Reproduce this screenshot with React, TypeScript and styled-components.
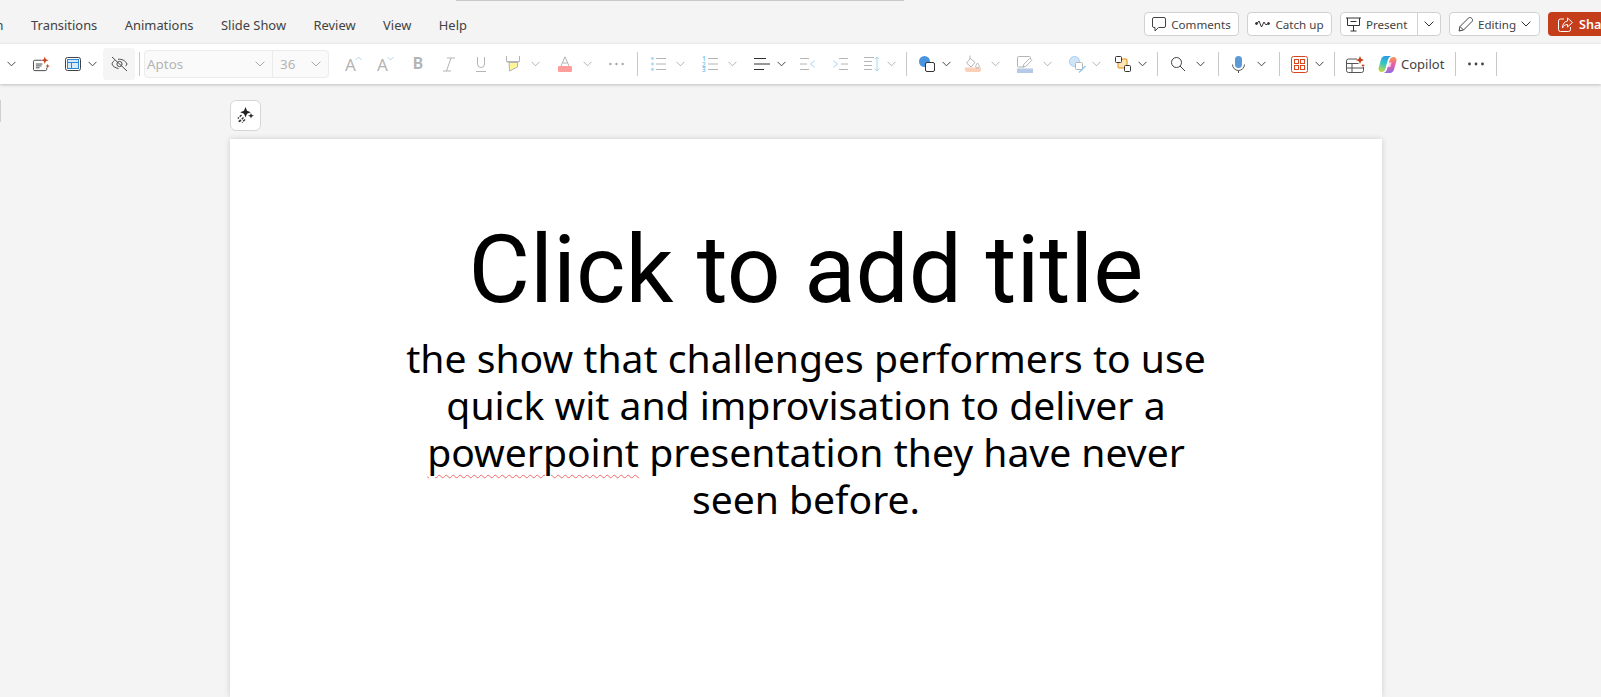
import React from "react";
import styled, { createGlobalStyle } from "styled-components";

const Global = createGlobalStyle`
  html, body { margin: 0; padding: 0; height: 100%; background: #f4f4f4; overflow: hidden; }
  #root { height: 100%; }
  * { box-sizing: border-box; }
`;

const UI = `"Noto Sans", "Open Sans", sans-serif`;
const HEADING = `"Roboto", "Noto Sans", sans-serif`;
const BODY = `"Noto Sans", "Roboto", sans-serif`;
const DIM = "#b4b4b4";
const BLUE = "#a8d6f3";

const Page = styled.div`
  width: 1601px; height: 697px; overflow: hidden; display: flex; flex-direction: column;
  background: #f4f4f4; font-family: ${UI}; position: relative;
`;
const TopSliver = styled.div`
  position: absolute; left: 456px; top: 0; width: 448px; height: 1px; background: #c8c8c8;
`;
const TabRow = styled.div`
  height: 44px; flex: none; display: flex; align-items: center; padding-top: 5px; overflow: hidden;
`;
const Tabs = styled.div`display: flex; gap: 27.5px; margin-left: -38.5px; flex: 1;`;
const Tab = styled.span`font-size: 12.9px; color: #424242; white-space: nowrap;`;
const Actions = styled.div`display: flex; gap: 8px; margin-right: -60px; align-items: stretch; height: 24px; margin-top: -1px;`;
const ActionBtn = styled.div<{ $w: number }>`
  width: ${p => p.$w}px; display: flex; align-items: center; justify-content: center; gap: 5px;
  background: #fff; border: 1px solid #d1d1d1; border-radius: 4px; font-size: 11.6px; color: #424242; white-space: nowrap;
`;
const SplitPart = styled.div<{ $w: number; $divider?: boolean }>`
  width: ${p => p.$w}px; height: 100%; display: flex; align-items: center; justify-content: center; gap: 5px;
  border-left: ${p => (p.$divider ? "1px solid #d1d1d1" : "none")};
`;
const ShareBtn = styled.div`
  width: 113px; display: flex; align-items: center; gap: 6px; padding-left: 10px; background: #c43e1c;
  border-radius: 4px; color: #fff; font-size: 12.6px; font-weight: 600;
`;

const Ribbon = styled.div`
  height: 40px; flex: none; background: #fff; display: flex; align-items: center; padding-left: 7px;
  box-shadow: 0 1px 3px rgba(0,0,0,.22); position: relative; z-index: 1;
`;
const Slot = styled.div<{ $g: number; $w: number }>`
  margin-left: ${p => p.$g}px; width: ${p => p.$w}px; flex: none; display: flex; align-items: center; justify-content: center;
`;
const Sep = styled.div<{ $g: number }>`
  margin-left: ${p => p.$g}px; width: 1px; height: 24px; background: #c8c8c8; flex: none;
`;
const HideBtn = styled(Slot)`height: 32px; background: #f5f5f5; border-radius: 4px;`;
const Combo = styled.div<{ $g: number }>`
  margin-left: ${p => p.$g}px; width: 185px; height: 28px; flex: none; display: flex;
  border: 1px solid #ebebeb; border-radius: 4px; background: #fafafa; font-size: 13.4px; color: ${DIM};
`;
const ComboPart = styled.div<{ $w: number; $divider?: boolean }>`
  width: ${p => p.$w}px; display: flex; align-items: center; justify-content: space-between; padding: 0 7px 0 2px;
  border-left: ${p => (p.$divider ? "1px solid #ebebeb" : "none")};
`;
const ComboSize = styled(ComboPart)`padding-left: 7px;`;
const CopilotLabel = styled.span<{ $g: number }>`
  margin-left: ${p => p.$g}px; width: 45px; font-size: 13px; color: #424242; flex: none; white-space: nowrap;
`;

const Canvas = styled.main`flex: 1; min-height: 0; padding: 16px 0 0 0; display: flex; flex-direction: column; position: relative;`;
const PaneEdge = styled.div`position: absolute; left: 0; top: 16px; width: 1px; height: 22px; background: #d0d0d0;`;
const AiBtn = styled.div`
  margin-left: 230px; width: 31px; height: 31px; flex: none; background: #fff; border: 1px solid #d6d6d6; border-radius: 6px;
  display: flex; align-items: center; justify-content: center;
`;
const Slide = styled.section`
  margin: 8px 0 0 230px; width: 1152px; flex: 1; background: #fff; box-shadow: 0 0 6px rgba(0,0,0,.16);
  display: flex; flex-direction: column; align-items: center; color: #000; text-align: center;
`;
const Title = styled.h1`
  margin: 75px 0 0; font-family: ${HEADING}; font-size: 94.5px; font-weight: 400; line-height: 112px; white-space: nowrap;
`;
const Body = styled.p`
  margin: 8px 0 0; font-family: ${BODY}; font-size: 39.1px; font-weight: 400; line-height: 47px; white-space: nowrap;
`;
const Misspelled = styled.span`
  text-decoration: underline wavy #f26a6a 1px; text-underline-offset: 7px;
`;

const Chev = ({ dark }: { dark?: boolean }) => (
  <svg width="10" height="6" viewBox="0 0 10 6" fill="none" stroke={dark ? "#303030" : "#a8a8a8"} strokeWidth="1">
    <path d="M.6.6 5 5 9.4.6" />
  </svg>
);
const NewSlide = () => (
  <svg width="18" height="17" viewBox="0 0 18 17" fill="none">
    <path d="M9 4H2a1.500 1.500 0 0 0-1.500 1.500v8A1.500 1.500 0 0 0 2 15h11a1.500 1.500 0 0 0 1.500-1.500V12" stroke="#424242" />
    <path d="M3 8h7M3 10h6M3 12h4" stroke="#424242" />
    <path d="M12.500 0l1 3 3 1-3 1-1 3-1-3-3-1 3-1zM15.500 8l.7 1.500 1.500.7-1.500.7-.7 1.500-.7-1.500-1.500-.7 1.500-.7z" fill="#c8401c" />
  </svg>
);
const LayoutIc = () => (
  <svg width="16" height="14" viewBox="0 0 16 14" fill="none">
    <rect x=".5" y=".5" width="15" height="13" rx="2" stroke="#424242" />
    <rect x="2.500" y="2.500" width="11" height="9" fill="#d6ebf9" stroke="#2b88d8" />
    <path d="M2.500 5.500h11M6.500 5.500v6" stroke="#2b88d8" />
  </svg>
);
const EyeOff = () => (
  <svg width="17" height="16" viewBox="0 0 17 16" fill="none" stroke="#4a4a4a">
    <path d="M1 1l15 14" />
    <path d="M3.500 4.500C2 5.500 1.200 7 1 8c.6 2.300 3.500 4 6.500 4.500M7 3.300C10.500 2.800 14.500 4.500 16 8c-.3.800-.8 1.500-1.300 2.200" />
    <circle cx="8.500" cy="8" r="2.600" />
  </svg>
);
const FontGrow = ({ up }: { up?: boolean }) => (
  <svg width="17" height="18" viewBox="0 0 17 18" fill="none">
    <text x="0" y="16" fontFamily="Noto Sans" fontSize="17" fill={DIM}>A</text>
    <path d={up ? "M10.500 5 13.500 2l3 3" : "M10.500 2l3 3 3-3"} stroke={BLUE} />
  </svg>
);
const BoldIc = () => (
  <svg width="12" height="16" viewBox="0 0 12 16">
    <text x="6" y="14.500" textAnchor="middle" fontFamily="Roboto" fontSize="19" fontWeight={700} fill={DIM}>B</text>
  </svg>
);
const ItalicIc = () => (
  <svg width="12" height="15" viewBox="0 0 12 15" fill="none" stroke={DIM}>
    <path d="M4 1h8M8 1 3.500 14M0 14h8" />
  </svg>
);
const UnderlineIc = () => (
  <svg width="10" height="15" viewBox="0 0 10 15" fill="none" stroke={DIM}>
    <path d="M1.500 0v7a3.500 3.500 0 0 0 7 0V0M0 14.500h10" />
  </svg>
);
const Highlighter = () => (
  <svg width="14" height="16" viewBox="0 0 14 16" fill="none">
    <path d="M3 6.500 11.500 6.500 11.500 11 3.500 15z" fill="#fdf59a" stroke="#b4b4b4" />
    <path d="M.5 0v5.500h13V0M1 6h12" stroke="#b4b4b4" />
  </svg>
);
const FontColor = () => (
  <svg width="14" height="16" viewBox="0 0 14 16" fill="none">
    <path d="M3 10 7 .8 11 10M4.500 7h5" stroke="#b4b4b4" />
    <rect y="10" width="14" height="6" rx="1" fill="#ff9c9c" />
  </svg>
);
const Dots = ({ c = "#a8a8a8", r = 1.300 }: { c?: string; r?: number }) => (
  <svg width="18" height="4" viewBox="0 0 18 4" fill={c}>
    <circle cx="2.500" cy="2" r={r} /><circle cx="9" cy="2" r={r} /><circle cx="15.500" cy="2" r={r} />
  </svg>
);
const Bullets = () => (
  <svg width="15" height="14" viewBox="0 0 15 14" fill="none">
    <g fill={BLUE}><circle cx="1.500" cy="1.500" r="1.400" /><circle cx="1.500" cy="7" r="1.400" /><circle cx="1.500" cy="12.500" r="1.400" /></g>
    <path d="M5 1.500h10M5 7h10M5 12.500h10" stroke="#b4b4b4" />
  </svg>
);
const Numbers = () => (
  <svg width="16" height="16" viewBox="0 0 16 16" fill="none">
    <g fill="#8ecbf0" fontFamily="Noto Sans" fontSize="6.500" fontWeight="700">
      <text x="0" y="5">1</text><text x="0" y="10.500">2</text><text x="0" y="16">3</text>
    </g>
    <path d="M6 2.500h10M6 8h10M6 13.500h10" stroke="#b4b4b4" />
  </svg>
);
const AlignIc = () => (
  <svg width="16" height="14" viewBox="0 0 16 14" fill="none" stroke="#303030">
    <path d="M0 1.500h12M0 7h16M0 12.500h10" />
  </svg>
);
const Indent = ({ inc }: { inc?: boolean }) => (
  <svg width="15" height="14" viewBox="0 0 15 14" fill="none">
    {inc ? (
      <><path d="M6 1.500h9M8 7h7M6 12.500h9" stroke="#b4b4b4" /><path d="M0 3.500 4.500 7 0 10.500" stroke={BLUE} /></>
    ) : (
      <><path d="M0 1.500h9M0 7h7M0 12.500h9" stroke="#b4b4b4" /><path d="M15 3.500 10.500 7 15 10.500" stroke={BLUE} /></>
    )}
  </svg>
);
const LineSpacing = () => (
  <svg width="16" height="16" viewBox="0 0 16 16" fill="none">
    <path d="M0 1.500h10M0 5.500h8M0 9.500h8M0 13.500h8" stroke="#b4b4b4" />
    <path d="M13 1v14M10.800 3.200 13 1l2.200 2.200M10.800 12.800 13 15l2.200-2.200" stroke={BLUE} />
  </svg>
);
const Shapes = () => (
  <svg width="16" height="16" viewBox="0 0 16 16" fill="none">
    <circle cx="5.500" cy="5.500" r="5.500" fill="#4a95df" />
    <rect x="6.500" y="6.500" width="9" height="9" rx="1.500" fill="#fff" stroke="#333" />
  </svg>
);
const Fill = () => (
  <svg width="16" height="18" viewBox="0 0 16 18" fill="none">
    <path d="M0 12.500h16v2.500a2 2 0 0 1-2 2H2a2 2 0 0 1-2-2z" fill="#fbd0b9" />
    <path d="M5 .5v3.500M1.500 8 5.500 3.500 10 7.500 6 12z" stroke="#b4b4b4" />
    <path d="M12.500 8c-1 1.500-1.800 2.300-1.800 3.300a1.800 1.800 0 0 0 3.600 0c0-1-.8-1.800-1.800-3.300z" stroke="#b4b4b4" />
  </svg>
);
const Outline = () => (
  <svg width="16" height="17" viewBox="0 0 16 17" fill="none">
    <rect y="12.500" width="16" height="4.500" fill="#b7c9e8" />
    <path d="M7 11H1.500a1 1 0 0 1-1-1V1.500a1 1 0 0 1 1-1h11a1 1 0 0 1 1 1V3" stroke="#b4b4b4" />
    <path d="M6 11l.8-2.700 6-6 2 2-6 6z" fill="#fff" stroke="#b4b4b4" />
  </svg>
);
const Effects = () => (
  <svg width="17" height="17" viewBox="0 0 17 17" fill="none">
    <circle cx="5.500" cy="5.500" r="5" fill="#cfe6f8" stroke="#a8cdf0" />
    <rect x="6.500" y="6.500" width="7" height="7" rx="1" fill="#fff" stroke="#b4b4b4" />
    <path d="M10 16.500l6.500-6.500" stroke="#8ecbf0" strokeWidth="1.500" />
  </svg>
);
const Arrange = () => (
  <svg width="16" height="16" viewBox="0 0 16 16" fill="none">
    <rect x="3" y="3" width="9" height="9" rx="1" fill="#fde5b8" stroke="#e5890a" />
    <rect x=".5" y=".5" width="6" height="6" rx="1" fill="#fff" stroke="#333" />
    <rect x="9.500" y="9.500" width="6" height="6" rx="1" fill="#fff" stroke="#333" />
  </svg>
);
const SearchIc = () => (
  <svg width="14" height="14" viewBox="0 0 14 14" fill="none" stroke="#404040">
    <circle cx="5.500" cy="5.500" r="5" /><path d="M9 9l5 5" />
  </svg>
);
const Mic = () => (
  <svg width="13" height="17" viewBox="0 0 13 17" fill="none">
    <rect x="3" y="0" width="7" height="12" rx="3.500" fill="#5b9ad6" />
    <path d="M.5 8.500a6 6 0 0 0 12 0M6.500 14.500V17" stroke="#555" />
  </svg>
);
const AddIns = () => (
  <svg width="17" height="17" viewBox="0 0 17 17" fill="none" stroke="#d8461f">
    <rect x=".5" y=".5" width="16" height="16" rx="2" />
    <rect x="3.500" y="3.500" width="4" height="4" /><rect x="9.500" y="3.500" width="4" height="4" />
    <rect x="3.500" y="9.500" width="4" height="4" /><rect x="9.500" y="9.500" width="4" height="4" />
  </svg>
);
const Designer = () => (
  <svg width="19" height="17" viewBox="0 0 19 17" fill="none">
    <path d="M11 3H2.500A2 2 0 0 0 .5 5v9.500a2 2 0 0 0 2 2h13a2 2 0 0 0 2-2V11" stroke="#555" />
    <path d="M.5 7.500h12M.5 12h17M6 7.500v9" stroke="#555" />
    <path d="M14 0l1.200 2.800L18 4l-2.800 1.200L14 8l-1.200-2.800L10 4l2.800-1.200zM17 7.500l.6 1.400 1.400.6-1.400.6-.6 1.400-.6-1.400-1.400-.6 1.400-.6z" fill="#c8401c" />
  </svg>
);
const CopilotLogo = () => (
  <svg width="19" height="19" viewBox="0 0 19 19">
    <defs>
      <linearGradient id="cp1" x1=".6" y1="0" x2=".3" y2="1"><stop offset="0" stopColor="#2b9be8" /><stop offset=".5" stopColor="#35c9c0" /><stop offset="1" stopColor="#c9d84a" /></linearGradient>
      <linearGradient id="cp2" x1=".5" y1="0" x2=".6" y2="1"><stop offset="0" stopColor="#f7a14a" /><stop offset=".45" stopColor="#ee5fa0" /><stop offset="1" stopColor="#8a6ce8" /></linearGradient>
    </defs>
    <path d="M7 1h6.500c-2 .6-3 2-3.600 4L7.500 13.500C7 15.500 6 17 3.500 17 1.500 17 0 15 .6 13L3 4.500C3.600 2.300 5 1 7 1z" fill="url(#cp1)" />
    <path d="M12 18H5.500c2-.6 3-2 3.600-4l2.400-8.500C12 3.500 13 2 15.500 2 17.500 2 19 4 18.400 6L16 14.500C15.400 16.700 14 18 12 18z" fill="url(#cp2)" />
    <path d="M9.300 7.500h4.200l-1.200 4.500H8z" fill="#fff" opacity=".75" />
  </svg>
);
const CommentIc = () => (
  <svg width="14" height="15" viewBox="0 0 14 15" fill="none" stroke="#424242">
    <path d="M2 .5h10A1.500 1.500 0 0 1 13.500 2v7a1.500 1.500 0 0 1-1.500 1.500H6.500L3 14v-3.500H2A1.500 1.500 0 0 1 .5 9V2A1.500 1.500 0 0 1 2 .5z" />
  </svg>
);
const CatchUpIc = () => (
  <svg width="15" height="10" viewBox="0 0 15 10" fill="none" stroke="#333">
    <circle cx="1.500" cy="4.500" r="1" fill="#333" /><circle cx="13.500" cy="4.500" r="1" fill="#333" />
    <path d="M2 4.500l2-2.500 2.500 6L9 3l1.500 2.500h2" />
  </svg>
);
const PresentIc = () => (
  <svg width="15" height="15" viewBox="0 0 15 15" fill="none" stroke="#333">
    <path d="M0 1h15M1.500 1v7.500h12V1M7.500 8.500V14M4.500 14h6M4.500 4.500h6" />
  </svg>
);
const PencilIc = () => (
  <svg width="15" height="15" viewBox="0 0 15 15" fill="none" stroke="#424242">
    <path d="M1 14l1-4.500L10.500 1c.8-.7 2-.7 2.800 0l.7.7c.7.800.7 2 0 2.800L5.500 13z M2 9.500 5.500 13" />
  </svg>
);
const ShareIc = () => (
  <svg width="15" height="15" viewBox="0 0 15 15" fill="none" stroke="#fff">
    <path d="M6 2H2.500A2 2 0 0 0 .5 4v8.500a2 2 0 0 0 2 2h8a2 2 0 0 0 2-2V10" />
    <path d="M9.500 1 14.500 5.500 9.500 10V7.500C7 7.500 5 9 4.500 11c0-4 2-6.500 5-7z" />
  </svg>
);
const Sparkles = () => (
  <svg width="17" height="17" viewBox="0 0 17 17" fill="none">
    <path d="M8.500 0l1.500 3.800L13.800 5.300 10 6.800 8.500 10.600 7 6.800 3.200 5.300 7 3.800zM14 6l.8 1.900 2.200.8-2.200.8-.8 1.900-.8-1.900-2.200-.8 2.200-.8z" fill="#1f1f1f" />
    <path d="M4.500 8 .8 11.500M6.500 10.500 2 15M3.500 13 1 15.500M8 12.500 5 15.500" stroke="#333" strokeWidth="1.400" strokeDasharray="2.500 1" />
  </svg>
);

const Tools = () => (
  <Ribbon>
    <Slot $g={0} $w={9}><Chev dark /></Slot>
    <Slot $g={17} $w={17}><NewSlide /></Slot>
    <Slot $g={15} $w={16}><LayoutIc /></Slot>
    <Slot $g={7} $w={9}><Chev dark /></Slot>
    <HideBtn $g={6} $w={32}><EyeOff /></HideBtn>
    <Sep $g={4} />
    <Combo $g={4}>
      <ComboPart $w={127}>Aptos<Chev /></ComboPart>
      <ComboSize $w={56} $divider>36<Chev /></ComboSize>
    </Combo>
    <Slot $g={16} $w={17}><FontGrow up /></Slot>
    <Slot $g={15} $w={17}><FontGrow /></Slot>
    <Slot $g={19} $w={10}><BoldIc /></Slot>
    <Slot $g={20} $w={12}><ItalicIc /></Slot>
    <Slot $g={21} $w={10}><UnderlineIc /></Slot>
    <Slot $g={20} $w={14}><Highlighter /></Slot>
    <Slot $g={11} $w={9}><Chev /></Slot>
    <Slot $g={18} $w={14}><FontColor /></Slot>
    <Slot $g={11} $w={9}><Chev /></Slot>
    <Slot $g={16} $w={17}><Dots /></Slot>
    <Sep $g={12} />
    <Slot $g={13} $w={15}><Bullets /></Slot>
    <Slot $g={10} $w={9}><Chev /></Slot>
    <Slot $g={17} $w={16}><Numbers /></Slot>
    <Slot $g={10} $w={9}><Chev /></Slot>
    <Slot $g={17} $w={16}><AlignIc /></Slot>
    <Slot $g={7} $w={9}><Chev dark /></Slot>
    <Slot $g={14} $w={15}><Indent /></Slot>
    <Slot $g={18} $w={15}><Indent inc /></Slot>
    <Slot $g={16} $w={16}><LineSpacing /></Slot>
    <Slot $g={7} $w={9}><Chev /></Slot>
    <Sep $g={10} />
    <Slot $g={12} $w={16}><Shapes /></Slot>
    <Slot $g={7} $w={9}><Chev dark /></Slot>
    <Slot $g={14} $w={16}><Fill /></Slot>
    <Slot $g={10} $w={9}><Chev /></Slot>
    <Slot $g={17} $w={16}><Outline /></Slot>
    <Slot $g={10} $w={9}><Chev /></Slot>
    <Slot $g={17} $w={17}><Effects /></Slot>
    <Slot $g={6} $w={9}><Chev /></Slot>
    <Slot $g={14} $w={16}><Arrange /></Slot>
    <Slot $g={7} $w={9}><Chev dark /></Slot>
    <Sep $g={10} />
    <Slot $g={13} $w={14}><SearchIc /></Slot>
    <Slot $g={11} $w={9}><Chev dark /></Slot>
    <Sep $g={13} />
    <Slot $g={13} $w={13}><Mic /></Slot>
    <Slot $g={12} $w={9}><Chev dark /></Slot>
    <Sep $g={13} />
    <Slot $g={11} $w={17}><AddIns /></Slot>
    <Slot $g={7} $w={9}><Chev dark /></Slot>
    <Sep $g={10} />
    <Slot $g={11} $w={19}><Designer /></Slot>
    <Slot $g={13} $w={19}><CopilotLogo /></Slot>
    <CopilotLabel $g={4}>Copilot</CopilotLabel>
    <Sep $g={9} />
    <Slot $g={11} $w={18}><Dots c="#424242" r={1.400} /></Slot>
    <Sep $g={11} />
  </Ribbon>
);

export default function App() {
  return (
    <Page>
      <Global />
      <TopSliver />
      <TabRow>
        <Tabs>
          {["Design", "Transitions", "Animations", "Slide Show", "Review", "View", "Help"].map(t => (
            <Tab key={t}>{t}</Tab>
          ))}
        </Tabs>
        <Actions>
          <ActionBtn $w={95}><CommentIc />Comments</ActionBtn>
          <ActionBtn $w={85}><CatchUpIc />Catch up</ActionBtn>
          <ActionBtn $w={101}>
            <SplitPart $w={76}><PresentIc />Present</SplitPart>
            <SplitPart $w={24} $divider><Chev dark /></SplitPart>
          </ActionBtn>
          <ActionBtn $w={91}><PencilIc />Editing<Chev dark /></ActionBtn>
          <ShareBtn><ShareIc />Share</ShareBtn>
        </Actions>
      </TabRow>
      <Tools />
      <Canvas>
        <PaneEdge />
        <AiBtn><Sparkles /></AiBtn>
        <Slide>
          <Title>Click to add title</Title>
          <Body>
            the show that challenges performers to use<br />
            quick wit and improvisation to deliver a<br />
            <Misspelled>powerpoint</Misspelled> presentation they have never<br />
            seen before.
          </Body>
        </Slide>
      </Canvas>
    </Page>
  );
}
